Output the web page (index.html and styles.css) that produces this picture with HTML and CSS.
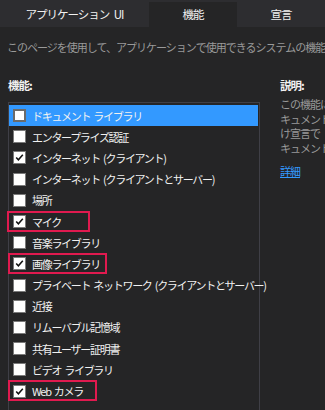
FILE: index.html
```html
<!DOCTYPE html>
<html lang="ja">
<head>
<meta charset="utf-8">
<link rel="stylesheet" href="styles.css">
</head>
<body>
<div class="tabs">
  <div class="tab tab-app">アプリケーション UI</div>
  <div class="tab tab-active">機能</div>
  <div class="tab tab-decl">宣言</div>
</div>
<p class="intro">このページを使用して、アプリケーションで使用できるシステムの機能ま</p>
<div class="main">
  <div class="left">
    <div class="heading">機能:</div>
    <div class="list">
      <div class="row selected"><span class="box"></span><span class="label">ドキュメント ライブラリ</span></div>
      <div class="row"><span class="box"></span><span class="label">エンタープライズ認証</span></div>
      <div class="row"><span class="box checked"><svg viewBox="0 0 13 13"><path d="M2.6 6.4 L5.2 9.2 L10.4 3.2"/></svg></span><span class="label">インターネット (クライアント)</span></div>
      <div class="row"><span class="box"></span><span class="label">インターネット (クライアントとサーバー)</span></div>
      <div class="row"><span class="box"></span><span class="label">場所</span></div>
      <div class="row mark mark-mic"><span class="box checked"><svg viewBox="0 0 13 13"><path d="M2.6 6.4 L5.2 9.2 L10.4 3.2"/></svg></span><span class="label">マイク</span></div>
      <div class="row"><span class="box"></span><span class="label">音楽ライブラリ</span></div>
      <div class="row mark mark-pic"><span class="box checked"><svg viewBox="0 0 13 13"><path d="M2.6 6.4 L5.2 9.2 L10.4 3.2"/></svg></span><span class="label">画像ライブラリ</span></div>
      <div class="row"><span class="box"></span><span class="label">プライベート ネットワーク (クライアントとサーバー)</span></div>
      <div class="row"><span class="box"></span><span class="label">近接</span></div>
      <div class="row"><span class="box"></span><span class="label">リムーバブル記憶域</span></div>
      <div class="row"><span class="box"></span><span class="label">共有ユーザー証明書</span></div>
      <div class="row"><span class="box"></span><span class="label">ビデオ ライブラリ</span></div>
      <div class="row mark mark-cam"><span class="box checked"><svg viewBox="0 0 13 13"><path d="M2.6 6.4 L5.2 9.2 L10.4 3.2"/></svg></span><span class="label">Web カメラ</span></div>
    </div>
  </div>
  <div class="right">
    <div class="heading">説明:</div>
    <div class="desc">
      <div class="line">この機能に</div>
      <div class="line">キュメント</div>
      <div class="line">け宣言で</div>
      <div class="line">キュメント</div>
    </div>
    <a class="more" href="#">詳細</a>
  </div>
</div>
</body>
</html>
```
FILE: styles.css
```css
html, body {
  margin: 0;
  padding: 0;
  background: #252526;
  overflow: hidden;
}
body {
  width: 325px;
  height: 410px;
  font-family: "Noto Sans CJK JP", "Noto Sans", sans-serif;
  font-size: 11px;
  letter-spacing: -1px;
  word-spacing: 3px;
  color: #f1f1f1;
}
.tabs {
  display: flex;
  height: 27px;
  background: #2d2d30;
}
.tab {
  display: flex;
  align-items: center;
  justify-content: center;
  color: #f1f1f1;
  font-size: 11.5px;
}
.tab-app { width: 149px; }
.tab-active {
  width: 88px;
  margin-top: 2px;
  background: #252526;
  padding-bottom: 2px;
}
.tab-decl { width: 88px; }
.intro {
  margin: 0;
  padding: 12px 0 0 7px;
  height: 24px;
  color: #999999;
  white-space: nowrap;
  line-height: 16px;
}
.main {
  display: flex;
  gap: 20px;
  padding: 14px 0 0 8px;
}
.left {
  width: 252px;
  flex: none;
}
.heading {
  font-weight: bold;
  font-size: 11.5px;
  line-height: 16px;
  height: 17px;
  color: #f1f1f1;
}
.list {
  margin-top: 8px;
  border: 1px solid #3f3f46;
  border-bottom: none;
  padding-top: 2px;
  height: 320px;
}
.row {
  position: relative;
  display: flex;
  align-items: center;
  gap: 6px;
  height: 21.2px;
  padding-left: 4px;
  white-space: nowrap;
  letter-spacing: -1.3px;
  word-spacing: 2px;
}
.row.selected {
  background: #3399ff;
  margin-right: 1px;
}
.box {
  width: 11px;
  height: 11px;
  flex: none;
  background: #ffffff;
  border: 1px solid #7a7a7a;
  display: flex;
}
.row.selected .box {
  border: 2px solid #6b6b6b;
  width: 9px;
  height: 9px;
}
.box svg {
  width: 11px;
  height: 11px;
}
.box path {
  fill: none;
  stroke: #111111;
  stroke-width: 1.8;
}
.label {
  line-height: 16px;
}
.mark::after {
  content: "";
  position: absolute;
  top: 0;
  left: -1px;
  height: 17px;
  border: 2px solid #e01a4f;
}
.mark-mic::after { width: 79px; left: -2px; }
.mark-pic::after { width: 95px; }
.mark-cam::after { width: 85px; }
.right {
  flex: none;
  width: 45px;
  white-space: nowrap;
}
.desc {
  margin-top: 3px;
  color: #999999;
  line-height: 14.5px;
}
.more {
  display: inline-block;
  margin-top: 9px;
  color: #3399ff;
  text-decoration: underline;
  line-height: 14px;
}
```
